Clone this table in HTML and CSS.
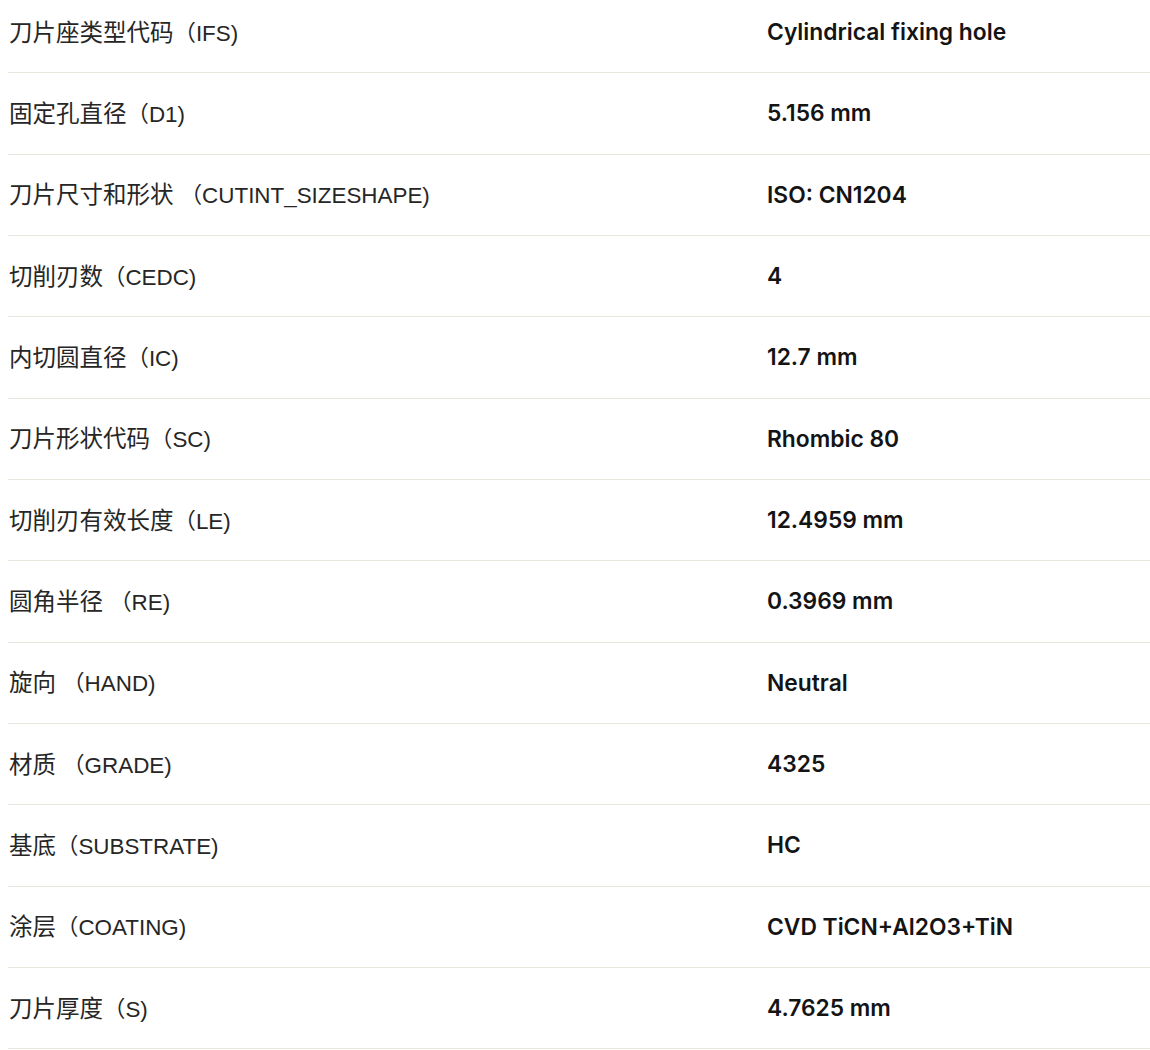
FILE: index.html
```html
<!DOCTYPE html>
<html lang="zh">
<head>
<meta charset="utf-8">
<title>刀片参数</title>
<link rel="stylesheet" href="styles.css">
</head>
<body>
<div class="specs">
  <div class="row"><div class="label"><span class="zh">刀片座类型代码</span><span class="code">（IFS)</span></div><div class="value">Cylindrical fixing hole</div></div>
  <div class="row"><div class="label"><span class="zh">固定孔直径</span><span class="code">（D1)</span></div><div class="value">5.156 mm</div></div>
  <div class="row"><div class="label"><span class="zh">刀片尺寸和形状</span><span class="code"> （CUTINT_SIZESHAPE)</span></div><div class="value">ISO: CN1204</div></div>
  <div class="row"><div class="label"><span class="zh">切削刃数</span><span class="code">（CEDC)</span></div><div class="value">4</div></div>
  <div class="row"><div class="label"><span class="zh">内切圆直径</span><span class="code">（IC)</span></div><div class="value">12.7 mm</div></div>
  <div class="row"><div class="label"><span class="zh">刀片形状代码</span><span class="code">（SC)</span></div><div class="value">Rhombic 80</div></div>
  <div class="row"><div class="label"><span class="zh">切削刃有效长度</span><span class="code">（LE)</span></div><div class="value">12.4959 mm</div></div>
  <div class="row"><div class="label"><span class="zh">圆角半径</span><span class="code"> （RE)</span></div><div class="value">0.3969 mm</div></div>
  <div class="row"><div class="label"><span class="zh">旋向</span><span class="code"> （HAND)</span></div><div class="value">Neutral</div></div>
  <div class="row"><div class="label"><span class="zh">材质</span><span class="code"> （GRADE)</span></div><div class="value">4325</div></div>
  <div class="row"><div class="label"><span class="zh">基底</span><span class="code">（SUBSTRATE)</span></div><div class="value">HC</div></div>
  <div class="row"><div class="label"><span class="zh">涂层</span><span class="code">（COATING)</span></div><div class="value">CVD TiCN+Al2O3+TiN</div></div>
  <div class="row"><div class="label"><span class="zh">刀片厚度</span><span class="code">（S)</span></div><div class="value">4.7625 mm</div></div>
</div>
</body>
</html>
```
FILE: styles.css
```css
html, body {
  background: #ffffff;
}
body {
  margin: 0 0 0 8px;
}
.specs {
  margin-top: -8px;
  display: flex;
  flex-direction: column;
}
.row {
  box-sizing: border-box;
  height: 81.33px;
  display: grid;
  grid-template-columns: 759px 1fr;
  align-items: center;
  border-bottom: 1px solid #e9e7dd;
}
.label {
  font-family: "Liberation Sans", "Noto Sans CJK SC", sans-serif;
  color: #262626;
  white-space: pre;
  padding-left: 1px;
  padding-bottom: 3px;
}
.zh {
  font-family: "Noto Sans CJK SC", sans-serif;
  font-size: 23.5px;
}
.code {
  font-family: "Liberation Sans", "Noto Sans CJK SC", sans-serif;
  font-size: 22.4px;
}
.value {
  font-family: "Inter", "Liberation Sans", sans-serif;
  font-weight: 600;
  font-size: 22.8px;
  color: #141414;
  padding-bottom: 1px;
}
```
